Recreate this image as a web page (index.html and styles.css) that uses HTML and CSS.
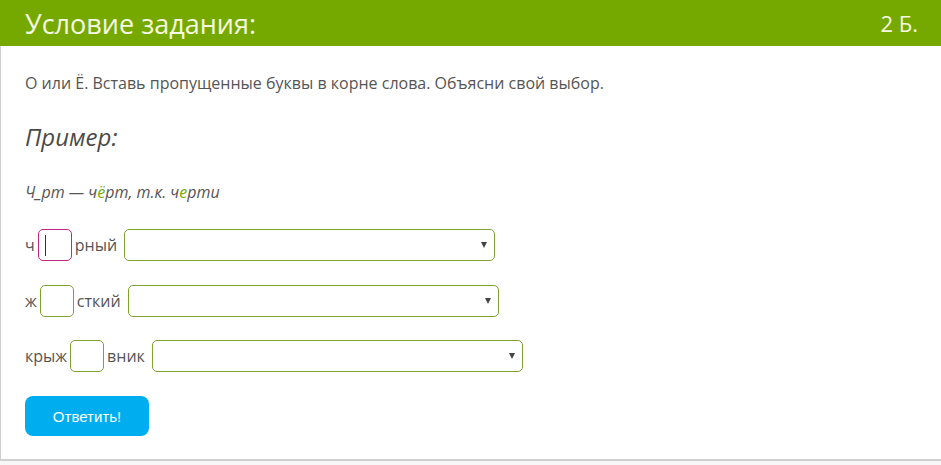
FILE: index.html
```html
<!DOCTYPE html>
<html lang="ru">
<head>
    <meta charset="UTF-8">
    <meta name="viewport" content="width=device-width, initial-scale=1.0">
    <title>Условие задания</title>
    <link rel="stylesheet" href="styles.css">
</head>
<body>
    <div class="task">
        <div class="task-header">
            <span class="task-title">Условие задания:</span>
            <span class="task-score">2 Б.</span>
        </div>
        <div class="task-body">
            <p class="task-text">О или Ё. Вставь пропущенные буквы в корне слова. Объясни свой выбор.</p>
            <h2 class="example-title">Пример:</h2>
            <p class="example">Ч_рт — ч<span class="hl">ё</span>рт, т.к. ч<span class="hl">е</span>рти</p>

            <form class="answers">
                <!-- черный -->
                <div class="row">
                    <span>ч</span>
                    <input type="text" class="letter focused" maxlength="1">
                    <span>рный</span>
                    <div class="select-wrap">
                        <select>
                            <option value=""></option>
                        </select>
                    </div>
                </div>
                <!-- жесткий -->
                <div class="row">
                    <span>ж</span>
                    <input type="text" class="letter" maxlength="1">
                    <span>сткий</span>
                    <div class="select-wrap">
                        <select>
                            <option value=""></option>
                        </select>
                    </div>
                </div>
                <!-- крыжовник -->
                <div class="row">
                    <span>крыж</span>
                    <input type="text" class="letter" maxlength="1">
                    <span>вник</span>
                    <div class="select-wrap">
                        <select>
                            <option value=""></option>
                        </select>
                    </div>
                </div>
                <button type="button" class="submit">Ответить!</button>
            </form>
        </div>
    </div>
</body>
</html>
```

FILE: styles.css
```css
body {
    margin: 0;
    background-color: #f7f7f7;
    font-family: "Open Sans", Arial, sans-serif;
    color: #555555;
}
.task {
    background-color: #ffffff;
    border-bottom: 2px solid #cfcfcf;
}
.task-header {
    display: flex;
    justify-content: space-between;
    align-items: center;
    height: 46px;
    padding: 0 23px 0 25px;
    background-color: #76a900;
    color: #f6f9e2;
    font-size: 27px;
}
.task-score {
    font-size: 22px;
}
.task-body {
    border-left: 1px solid #cfcfcf;
    padding: 25px 24px 23px 24px;
}
.task-text {
    margin: 0;
    font-size: 16px;
    line-height: 24px;
}
.example-title {
    margin: 26px 0 0;
    font-size: 24px;
    font-weight: normal;
    font-style: italic;
    line-height: 32px;
    color: #4a4a4a;
}
.example {
    margin: 28px 0 0;
    font-size: 16px;
    font-style: italic;
    line-height: 22px;
}
.hl {
    color: #76a900;
}
.answers {
    margin-top: 26px;
}
.row {
    display: flex;
    align-items: center;
    gap: 4px;
    height: 32px;
    margin-bottom: 23.5px;
    font-size: 16px;
}
.row:nth-of-type(3) {
    margin-bottom: 24px;
}
.letter {
    box-sizing: border-box;
    width: 34px;
    height: 32px;
    margin: 0 -1px;
    padding: 0 5px;
    border: 1px solid #7fa234;
    border-radius: 5px;
    font-family: inherit;
    font-size: 16px;
    color: #333333;
    outline: none;
}
.letter.focused {
    border-color: #c2277f;
    background: linear-gradient(#333333, #333333) 6px 5px / 1px 21px no-repeat #ffffff;
}
.select-wrap {
    position: relative;
    margin-left: 3px;
}
.select-wrap::after {
    content: "";
    position: absolute;
    right: 8px;
    top: 13px;
    border-left: 3px solid transparent;
    border-right: 3px solid transparent;
    border-top: 6px solid #444444;
    pointer-events: none;
}
.select-wrap select {
    appearance: none;
    box-sizing: border-box;
    width: 371px;
    height: 32px;
    border: 1px solid #7fa234;
    border-radius: 5px;
    background-color: #ffffff;
    font-family: inherit;
    font-size: 16px;
}
.submit {
    display: block;
    width: 124px;
    height: 40px;
    border: none;
    border-radius: 8px;
    background-color: #00aeef;
    color: #ffffff;
    font-family: "Liberation Sans", Arial, sans-serif;
    font-size: 15px;
    cursor: pointer;
}
```
